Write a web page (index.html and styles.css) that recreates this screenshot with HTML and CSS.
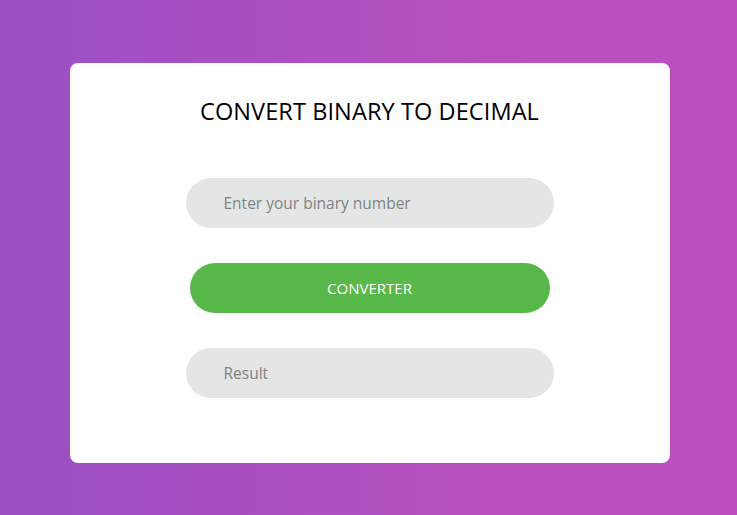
FILE: index.html
```html
<!DOCTYPE html>
<html lang="en">
<head>
<meta charset="utf-8">
<title>Convert Binary to Decimal</title>
<link rel="stylesheet" href="styles.css">
</head>
<body>
<main class="page">
  <section class="card">
    <h1 class="title">CONVERT BINARY TO DECIMAL</h1>
    <div class="form">
      <input class="field" type="text" placeholder="Enter your binary number">
      <button class="btn" type="button">CONVERTER</button>
      <input class="field" type="text" placeholder="Result" readonly>
    </div>
  </section>
</main>
</body>
</html>
```

FILE: styles.css
```css
* { box-sizing: border-box; }
html {
  height: 100%;
  background: linear-gradient(to right, #9a50c3, #bb4fbd 75%, #bc4fbd);
}
body {
  margin: 0;
  height: 100%;
  overflow: hidden;
  font-family: "Open Sans", "Liberation Sans", sans-serif;
}
.page {
  height: 100%;
  display: flex;
  justify-content: center;
  align-items: flex-start;
  padding: 63px 0 0 2px;
}
.card {
  width: 600px;
  height: 400px;
  background: #ffffff;
  border-radius: 8px;
  display: flex;
  flex-direction: column;
  align-items: center;
  padding-top: 30px;
}
.title {
  margin: 0;
  font-size: 23.5px;
  line-height: 36px;
  font-weight: 400;
  color: #000;
  letter-spacing: 0.1px;
}
.form {
  margin-top: 49px;
  display: flex;
  flex-direction: column;
  align-items: center;
  gap: 35px;
}
.field {
  width: 368px;
  height: 50px;
  border: none;
  outline: none;
  border-radius: 25px;
  background: #e4e6e6;
  padding: 0 38px;
  font-family: inherit;
  font-size: 15.5px;
  color: #333;
}
.field::placeholder { color: #7d8383; }
.btn {
  width: 360px;
  height: 50px;
  border: none;
  border-radius: 25px;
  background: #58b84a;
  color: #ffffff;
  font-family: inherit;
  font-size: 15px;
  cursor: pointer;
}
```
